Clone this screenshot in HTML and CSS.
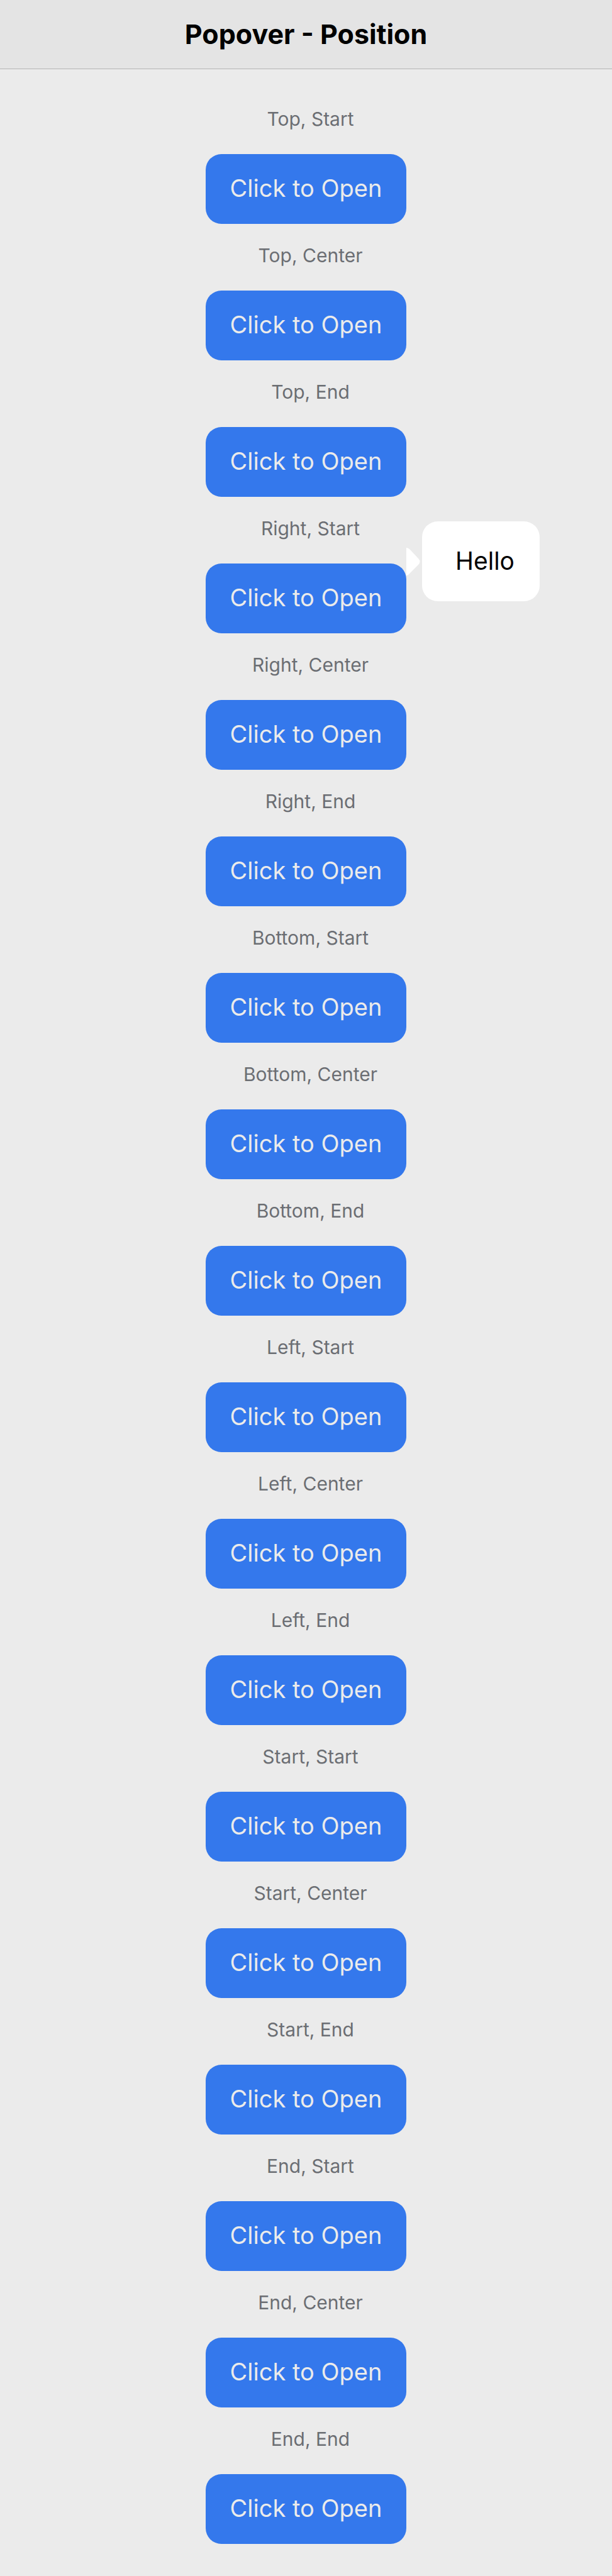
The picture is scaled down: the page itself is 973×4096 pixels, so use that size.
FILE: index.html
```html
<!DOCTYPE html>
<html lang="en">
<head>
<meta charset="utf-8">
<meta name="viewport" content="width=device-width, initial-scale=1">
<title>Popover - Position</title>
<link rel="stylesheet" href="styles.css">
</head>
<body>
<header class="header"><h1 class="title">Popover - Position</h1></header>
<main class="content">
<section class="item"><h2 class="label" id="l1">Top, Start</h2><button class="button" aria-describedby="l1">Click to Open</button></section>
<section class="item"><h2 class="label" id="l2">Top, Center</h2><button class="button" aria-describedby="l2">Click to Open</button></section>
<section class="item"><h2 class="label" id="l3">Top, End</h2><button class="button" aria-describedby="l3">Click to Open</button></section>
<section class="item"><h2 class="label" id="l4">Right, Start</h2>
<div class="anchor"><button class="button" aria-describedby="l4" aria-expanded="true">Click to Open</button>
<div class="popover" role="dialog" aria-label="Hello">
<svg class="arrow" viewBox="0 0 22 44" aria-hidden="true"><path d="M0 0Q3 0 6 3L19 17Q24 22 19 27L6 40Q3 44 0 44Z" fill="#fff"/></svg>
<div class="bubble">Hello</div>
</div></div></section>
<section class="item"><h2 class="label" id="l5">Right, Center</h2><button class="button" aria-describedby="l5">Click to Open</button></section>
<section class="item"><h2 class="label" id="l6">Right, End</h2><button class="button" aria-describedby="l6">Click to Open</button></section>
<section class="item"><h2 class="label" id="l7">Bottom, Start</h2><button class="button" aria-describedby="l7">Click to Open</button></section>
<section class="item"><h2 class="label" id="l8">Bottom, Center</h2><button class="button" aria-describedby="l8">Click to Open</button></section>
<section class="item"><h2 class="label" id="l9">Bottom, End</h2><button class="button" aria-describedby="l9">Click to Open</button></section>
<section class="item"><h2 class="label" id="l10">Left, Start</h2><button class="button" aria-describedby="l10">Click to Open</button></section>
<section class="item"><h2 class="label" id="l11">Left, Center</h2><button class="button" aria-describedby="l11">Click to Open</button></section>
<section class="item"><h2 class="label" id="l12">Left, End</h2><button class="button" aria-describedby="l12">Click to Open</button></section>
<section class="item"><h2 class="label" id="l13">Start, Start</h2><button class="button" aria-describedby="l13">Click to Open</button></section>
<section class="item"><h2 class="label" id="l14">Start, Center</h2><button class="button" aria-describedby="l14">Click to Open</button></section>
<section class="item"><h2 class="label" id="l15">Start, End</h2><button class="button" aria-describedby="l15">Click to Open</button></section>
<section class="item"><h2 class="label" id="l16">End, Start</h2><button class="button" aria-describedby="l16">Click to Open</button></section>
<section class="item"><h2 class="label" id="l17">End, Center</h2><button class="button" aria-describedby="l17">Click to Open</button></section>
<section class="item"><h2 class="label" id="l18">End, End</h2><button class="button" aria-describedby="l18">Click to Open</button></section>
</main>
</body>
</html>
```
FILE: styles.css
```css
* { box-sizing: border-box; }

body {
  margin: 0;
  background: #ebebeb;
  color: #000;
  font-family: Inter, "Liberation Sans", sans-serif;
}

.header {
  padding: 30px 24px 31px;
  border-bottom: 1px solid #b3b3b3;
  background: #e4e4e4;
  text-align: center;
}

.title {
  margin: 0;
  font-size: 43px;
  font-weight: 700;
  line-height: 48px;
}

.content {
  display: flex;
  flex-direction: column;
  padding: 29px 0 51px;
}

.item {
  display: flex;
  flex-direction: column;
  align-items: center;
  padding-top: 32px;
}

.label {
  margin: 0 0 38px;
  padding-left: 14px;
  color: #6b6e73;
  font-size: 30px;
  font-weight: 400;
  line-height: 36px;
}

.button {
  display: block;
  min-width: 319px;
  padding: 30px 36px 33px;
  border: 0;
  border-radius: 25px;
  background: #3478ec;
  color: #ebebeb;
  font: 400 38px/48px Inter, "Liberation Sans", sans-serif;
  white-space: nowrap;
}

.anchor { position: relative; }

/* The popover opens beside its trigger, arrow first. */
.popover {
  position: absolute;
  top: -67px;
  left: 100%;
  display: flex;
  align-items: center;
  gap: 3px;
}

.arrow {
  width: 22px;
  height: 44px;
}

.bubble {
  min-width: 187px;
  padding: 39px 36px 40px 53px;
  border-radius: 25px;
  background: #fff;
  font-size: 39px;
  line-height: 48px;
}
```
